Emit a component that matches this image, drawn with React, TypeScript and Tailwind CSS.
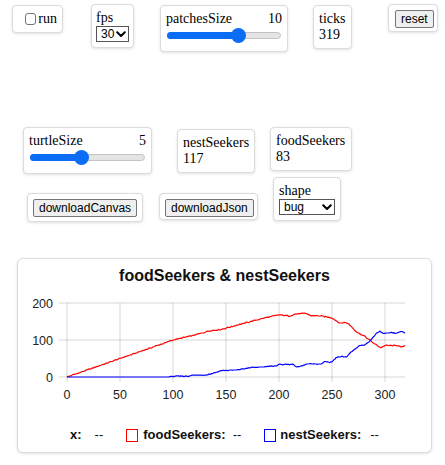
import React from 'react'

const box =
  "bg-white border border-[#dcdcdc] rounded-[4px] shadow-[0_1px_3px_rgba(0,0,0,0.12)] p-[5px] font-['Liberation_Serif',serif] text-[14px] leading-[16px] text-black"

const btn =
  "block h-[18px] px-[5px] border border-[#767676] rounded-[2px] bg-[#efefef] text-[12px] leading-[14px] text-black font-['Liberation_Sans',Arial,sans-serif]"

// key points of the two plotted series (tick, value)
const RED: [number, number][] = [
  [0, 0], [100, 100], [120, 113], [135, 125], [145, 128], [160, 140], [180, 155], [195, 165],
  [200, 168], [210, 165], [215, 170], [225, 172], [230, 166], [240, 165], [250, 160], [255, 150],
  [258, 145], [262, 148], [266, 143], [272, 125], [276, 117], [280, 112], [290, 90], [296, 79],
  [300, 85], [313, 85], [315, 80], [319, 84],
]

const BLUE: [number, number][] = [
  [0, 0], [96, 0], [98, 2], [115, 2], [117, 5], [130, 5], [135, 8], [140, 12], [145, 17],
  [160, 19], [170, 24], [175, 26], [185, 27], [190, 29], [198, 30], [200, 34], [213, 34],
  [217, 27], [222, 30], [226, 35], [240, 35], [243, 42], [248, 40], [250, 41], [254, 52],
  [256, 55], [264, 55], [268, 68], [272, 75], [276, 85], [280, 85], [285, 95], [292, 118],
  [295, 123], [298, 118], [302, 118], [306, 120], [311, 118], [313, 122], [316, 122], [319, 119],
]

function interp(keys: [number, number][], t: number) {
  for (let i = 0; i < keys.length - 1; i++) {
    const [t0, v0] = keys[i]
    const [t1, v1] = keys[i + 1]
    if (t <= t1) return v0 + ((v1 - v0) * (t - t0)) / (t1 - t0)
  }
  return keys[keys.length - 1][1]
}

function noise(i: number, seed: number) {
  const s = Math.sin(i * 12.9898 + seed * 78.233) * 43758.5453
  return s - Math.floor(s)
}

const ticks = Array.from({ length: 320 }, (_, t) => t)
const red = ticks.map((t) => (t === 0 ? 0 : Math.max(0, Math.round(interp(RED, t) + (noise(t, 1) - 0.5) * 2.4))))
const blue = ticks.map((t) => (t < 100 ? Math.round(interp(BLUE, t)) : Math.round(interp(BLUE, t) + (noise(t, 2) - 0.5) * 1.6)))

const sx = (t: number) => 49 + t * 1.06
const sy = (v: number) => 91 - v * 0.37
const toPoints = (d: number[]) => d.map((v, t) => `${sx(t).toFixed(1)},${sy(v).toFixed(1)}`).join(' ')

const Slider: React.FC<{ width: number; frac: number }> = ({ width, frac }) => {
  const center = 7.5 + frac * (width - 15)
  return (
    <div className="relative h-[19px] mx-[1px]" style={{ width }}>
      <div className="absolute left-0 right-0 top-[5px] h-[7px] rounded-full bg-[#e4e4e4] border border-[#c4c4c4]" />
      <div className="absolute left-0 top-[5px] h-[7px] rounded-full bg-[#0b6cf5]" style={{ width: center }} />
      <div className="absolute top-[1px] w-[15px] h-[15px] rounded-full bg-[#0b6cf5]" style={{ left: center - 7.5 }} />
    </div>
  )
}

const Select: React.FC<{ value: string; options: string[]; width: number }> = ({ value, options, width }) => (
  <div className="relative" style={{ width }}>
    <select
      defaultValue={value}
      className="block appearance-none w-full h-[16px] border border-[#555] rounded-none bg-white pl-[4px] text-[12px] leading-[14px] text-black font-['Liberation_Sans',Arial,sans-serif] outline-none"
    >
      {options.map((o) => (
        <option key={o}>{o}</option>
      ))}
    </select>
    <svg className="pointer-events-none absolute right-[3px] top-[5px]" width="10" height="7" viewBox="0 0 10 7">
      <path d="M1.2 1.2 L5 5 L8.8 1.2" fill="none" stroke="#000" strokeWidth="2" strokeLinecap="round" strokeLinejoin="round" />
    </svg>
  </div>
)

const Monitor: React.FC<{ label: string; value: string; className?: string }> = ({ label, value, className }) => (
  <div className={`${box} h-[44px] ${className ?? ''}`}>
    <div>{label}</div>
    <div>{value}</div>
  </div>
)

const App: React.FC = () => {
  return (
    <div className="w-[445px] h-[465px] bg-white overflow-hidden flex flex-col">
      {/* top row */}
      <div className="flex items-start pl-[12px] pt-[4px]">
        <label className={`${box} mt-[1px] w-[51px] h-[28px] flex items-center pl-[12px]`}>
          <span className="w-[12px] h-[12px] border border-[#767676] rounded-[3px] bg-white mr-[2px]" />
          run
        </label>

        <div className={`${box} ml-[28px] w-[43px] h-[44px] px-[4px]`}>
          <div>fps</div>
          <Select value="30" options={['30', '60']} width={33} />
        </div>

        <div className={`${box} ml-[26px] mt-[1px] w-[128px] h-[47px]`}>
          <div className="flex justify-between">
            <span>patchesSize</span>
            <span>10</span>
          </div>
          <Slider width={114} frac={9 / 14} />
        </div>

        <Monitor label="ticks" value="319" className="ml-[25px] mt-[1px] w-[39px]" />

        <div className={`${box} ml-[36px] w-[50px] h-[28px] px-[6px]`}>
          <button className={btn}>reset</button>
        </div>
      </div>

      {/* second row */}
      <div className="flex items-start pl-[23px] mt-[75px]">
        <div className={`${box} w-[129px] h-[47px]`}>
          <div className="flex justify-between">
            <span>turtleSize</span>
            <span>5</span>
          </div>
          <Slider width={115} frac={4 / 9} />
        </div>
        <Monitor label="nestSeekers" value="117" className="ml-[25px] mt-[2px] w-[78px]" />
        <Monitor label="foodSeekers" value="83" className="ml-[15px] w-[82px]" />
      </div>

      {/* third row */}
      <div className="flex items-start pl-[27px] mt-[3px]">
        <div className={`${box} mt-[16px] w-[116px] h-[29px]`}>
          <button className={btn}>downloadCanvas</button>
        </div>
        <div className={`${box} ml-[16px] mt-[16px] w-[99px] h-[27px]`}>
          <button className={btn}>downloadJson</button>
        </div>
        <div className={`${box} ml-[15px] w-[68px] h-[44px]`}>
          <div>shape</div>
          <Select value="bug" options={['bug', 'default', 'circle']} width={56} />
        </div>
      </div>

      {/* plot */}
      <div className="ml-[17px] mt-[36px] w-[415px] h-[195px] bg-white border border-[#dcdcdc] rounded-[6px] shadow-[0_1px_3px_rgba(0,0,0,0.12)] pt-[7px] font-['Liberation_Sans',Arial,sans-serif] text-[#111]">
        <div className="text-center text-[16px] leading-[20px] font-bold">foodSeekers &amp; nestSeekers</div>
        <svg width="413" height="124" viewBox="0 0 413 124" className="block">
          {[0, 50, 100, 150, 200, 250, 300].map((t) => (
            <line key={t} x1={sx(t)} x2={sx(t)} y1={17} y2={96} stroke="rgba(0,0,0,0.08)" strokeWidth="2" />
          ))}
          {[0, 100, 200].map((v) => (
            <line key={v} x1={41} x2={387} y1={sy(v)} y2={sy(v)} stroke="rgba(0,0,0,0.08)" strokeWidth="2" />
          ))}
          {[0, 100, 200].map((v) => (
            <text key={v} x={35} y={sy(v) + 4.5} textAnchor="end" fontSize="12.5" fill="#222">
              {v}
            </text>
          ))}
          {[0, 50, 100, 150, 200, 250, 300].map((t) => (
            <text key={t} x={sx(t)} y={113} textAnchor="middle" fontSize="12.5" fill="#222">
              {t}
            </text>
          ))}
          <polyline points={toPoints(red)} fill="none" stroke="#ff0000" strokeWidth="1.2" strokeLinejoin="round" />
          <polyline points={toPoints(blue)} fill="none" stroke="#0000ff" strokeWidth="1.2" strokeLinejoin="round" />
        </svg>
        <div className="mt-[15px] flex justify-center items-center text-[13px] leading-[20px]">
          <span className="font-bold">x:</span>
          <span className="ml-[13px]">--</span>
          <span className="ml-[23px] w-[12px] h-[13px] border-[1.5px] border-[#ff0000]" />
          <span className="ml-[5px] font-bold">foodSeekers:</span>
          <span className="ml-[7px]">--</span>
          <span className="ml-[23px] w-[12px] h-[13px] border-[1.5px] border-[#0000ff]" />
          <span className="ml-[4px] font-bold">nestSeekers:</span>
          <span className="ml-[9px]">--</span>
        </div>
      </div>
    </div>
  )
}

export default App
